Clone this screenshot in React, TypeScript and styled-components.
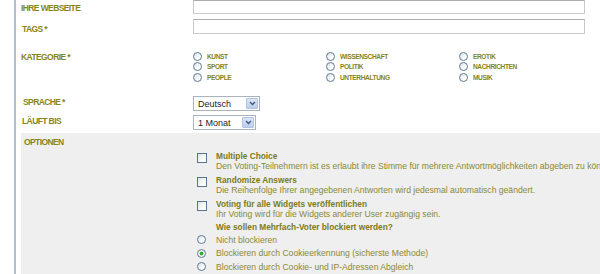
import styled, { createGlobalStyle } from "styled-components";

const GlobalStyle = createGlobalStyle`
    html, body {
        margin: 0;
        padding: 0;
        background: #fff;
        font-family: "Liberation Sans", Arial, sans-serif;
    }
`;

// linke Randlinie + Formular
const Frame = styled.div`
    margin-left: 14px;
    border-left: 2px solid #a9c2cb;
    height: 274px;
    overflow: hidden;
`;

const Row = styled.div<{ $top?: number; $height?: number }>`
    display: grid;
    grid-template-columns: 177px 1fr;
    margin-top: ${p => p.$top ?? 0}px;
    height: ${p => (p.$height ? `${p.$height}px` : "auto")};
`;

const Label = styled.div<{ $pad?: number; $left?: number }>`
    padding-left: ${p => p.$left ?? 5}px;
    padding-top: ${p => p.$pad ?? 0}px;
    font-size: 8.5px;
    line-height: 10px;
    font-weight: bold;
    letter-spacing: -0.6px;
    color: #86851c;
    text-transform: uppercase;
    white-space: nowrap;
`;

const TextInput = styled.div<{ $height: number }>`
    width: 392px;
    height: ${p => p.$height}px;
    box-sizing: border-box;
    border: 1px solid #c9c9c9;
    border-top-color: #adadad;
    background: #fff;
`;

const CategoryGrid = styled.div`
    display: grid;
    grid-template-columns: repeat(3, 133px);
    grid-template-rows: repeat(3, 10.5px);
    grid-auto-flow: column;
    padding-top: 17px;
`;

const Category = styled.label`
    display: flex;
    align-items: center;
    gap: 5px;
    font-size: 6.6px;
    font-weight: bold;
    letter-spacing: -0.4px;
    color: #86851c;
    white-space: nowrap;
`;

const Radio = styled.span<{ $checked?: boolean; $size?: number }>`
    flex: none;
    width: ${p => p.$size ?? 9}px;
    height: ${p => p.$size ?? 9}px;
    box-sizing: border-box;
    border-radius: 50%;
    border: 1px solid #5d7a96;
    background: ${p =>
        p.$checked
            ? "radial-gradient(circle, #2fae2f 0 1.6px, #e9ece9 2.2px, #fff 100%)"
            : "linear-gradient(135deg, #dcdfe3, #fff 70%)"};
`;

const Select = styled.div<{ $width: number }>`
    display: flex;
    align-items: center;
    justify-content: space-between;
    width: ${p => p.$width}px;
    height: 15px;
    box-sizing: border-box;
    padding: 0 1px 0 4px;
    border: 1px solid #a9b3bf;
    background: #fff;
    font-size: 9px;
    color: #1c1c1c;
`;

const SelectButton = styled.span`
    width: 12px;
    height: 11px;
    box-sizing: border-box;
    border: 1px solid #b1c3df;
    border-radius: 1px;
    background: linear-gradient(#dbe5f6, #bccde9);
    display: flex;
    align-items: center;
    justify-content: center;
`;

const Panel = styled.div`
    margin: 3px 0 0 5px;
    background: #efefef;
    padding: 4px 0 0 3px;
    height: 200px;
`;

const OptionList = styled.div`
    padding-left: 173px;
    margin-top: 4px;
`;

const Option = styled.div<{ $gap?: number }>`
    display: grid;
    grid-template-columns: 19px 1fr;
    margin-top: ${p => p.$gap ?? 3}px;
`;

const Checkbox = styled.span`
    width: 10px;
    height: 10px;
    margin-top: 2px;
    box-sizing: border-box;
    border: 1px solid #5a7593;
    background: linear-gradient(135deg, #dfe2e6, #fff 75%);
`;

const Title = styled.div`
    font-size: 8.3px;
    line-height: 10px;
    font-weight: bold;
    color: #7b7a1a;
    white-space: nowrap;
`;

const Desc = styled.div`
    font-size: 8.6px;
    line-height: 10px;
    color: #8a8933;
    white-space: nowrap;
`;

const Spacer = styled.div`
    height: 1px;
`;

const Choice = styled.div`
    display: grid;
    grid-template-columns: 19px 1fr;
    align-items: center;
    height: 13.5px;
`;

const Chevron = () => (
    <svg width="7" height="5" viewBox="0 0 7 5">
        <path d="M1 1 L3.5 3.5 L6 1" fill="none" stroke="#3f5680" strokeWidth="1.4" />
    </svg>
);

const categories = [
    "Kunst", "Sport", "People",
    "Wissenschaft", "Politik", "Unterhaltung",
    "Erotik", "Nachrichten", "Musik",
];

const options = [
    { title: "Multiple Choice", desc: "Den Voting-Teilnehmern ist es erlaubt ihre Stimme für mehrere Antwortmöglichkeiten abgeben zu können." },
    { title: "Randomize Answers", desc: "Die Reihenfolge Ihrer angegebenen Antworten wird jedesmal automatisch geändert." },
    { title: "Voting für alle Widgets veröffentlichen", desc: "Ihr Voting wird für die Widgets anderer User zugängig sein." },
];

const blockers = [
    "Nicht blockieren",
    "Blockieren durch Cookieerkennung (sicherste Methode)",
    "Blockieren durch Cookie- und IP-Adressen Abgleich",
];

export default function App() {
    return (
        <>
            <GlobalStyle />
            <Frame>
                <Row>
                    <Label $pad={3}>Ihre Webseite</Label>
                    <TextInput $height={14} />
                </Row>
                <Row $top={5}>
                    <Label $pad={5} $left={6}>Tags *</Label>
                    <TextInput $height={15} />
                </Row>
                <Row $height={61}>
                    <Label $pad={18}>Kategorie *</Label>
                    <CategoryGrid>
                        {categories.map(c => (
                            <Category key={c}>
                                <Radio />
                                {c.toUpperCase()}
                            </Category>
                        ))}
                    </CategoryGrid>
                </Row>
                <Row $top={1}>
                    <Label $pad={1} $left={7}>Sprache *</Label>
                    <Select $width={67}>
                        Deutsch
                        <SelectButton><Chevron /></SelectButton>
                    </Select>
                </Row>
                <Row $top={4}>
                    <Label $pad={1} $left={6}>Läuft bis</Label>
                    <Select $width={63}>
                        1 Monat
                        <SelectButton><Chevron /></SelectButton>
                    </Select>
                </Row>
                <Panel>
                    <Label $left={0}>Optionen</Label>
                    <OptionList>
                        {options.map((o, i) => (
                            <Option key={o.title} $gap={i === 0 ? 0 : 4}>
                                <Checkbox />
                                <div>
                                    <Title>{o.title}</Title>
                                    <Desc>{o.desc}</Desc>
                                </div>
                            </Option>
                        ))}
                        <Option $gap={3}>
                            <span />
                            <Title>Wie sollen Mehrfach-Voter blockiert werden?</Title>
                        </Option>
                        <Spacer />
                        {blockers.map((b, i) => (
                            <Choice key={b}>
                                <Radio $checked={i === 1} $size={9} />
                                <Desc>{b}</Desc>
                            </Choice>
                        ))}
                    </OptionList>
                </Panel>
            </Frame>
        </>
    );
}
